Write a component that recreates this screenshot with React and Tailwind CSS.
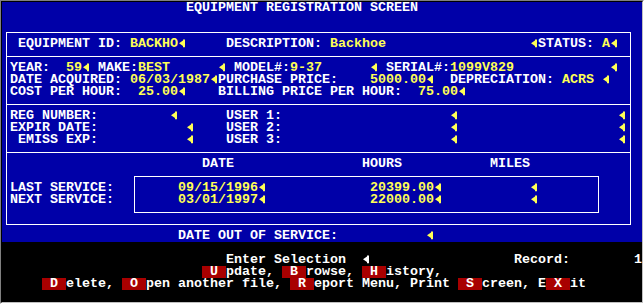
import React from 'react';

// colours of the old text-mode palette
const W = 'text-white';
const Y = 'text-[#ffff55]';
const RED = 'bg-[#a80000] text-white';

// the little "◄" field marker, drawn so it sits exactly in one 8px cell
const Arrow = ({ color }) => (
    <span className={`inline-block w-2 h-3 align-top ${color}`}>
        <svg width="8" height="12" viewBox="0 0 8 12" className="block">
            <polygon points="1,5.3 5,2.6 5,1.4 7,1.4 7,9.2 5,9.2 5,8" fill="currentColor" />
        </svg>
    </span>
);

// one cell run of text, kept to the 12px row height
const Cell = ({ className = '', children }) => (
    <span className={`inline-block h-3 leading-3 align-top ${className}`}>{children}</span>
);

// one screen line; items are [column, kind, text]
const Line = ({ start = 0, items = [] }) => {
    let col = start;
    const out = [];
    items.forEach(([at, kind, text], i) => {
        if (at > col) {
            out.push(<Cell key={`s${i}`}>{' '.repeat(at - col)}</Cell>);
            col = at;
        }
        if (kind === 'a' || kind === 'aw') {
            out.push(<Arrow key={i} color={kind === 'a' ? Y : W} />);
            col += 1;
        } else {
            const cls = kind === 'y' ? Y : kind === 'r' ? RED : W;
            out.push(<Cell key={i} className={cls}>{text}</Cell>);
            col += text.length;
        }
    });
    return <div className="h-3 leading-3 whitespace-pre">{out}</div>;
};

const Section = ({ children, last }) => (
    <div className={`pl-[3px] pt-[5px] pb-[6px] ${last ? '' : 'border-b border-white'}`}>{children}</div>
);

export default function App() {
    return (
        <div className="w-[644px] h-[304px] border border-[#808080] border-r-white border-b-white">
            <div className="w-[642px] h-[302px] border border-black border-r-[#c0c0c0] border-b-[#c0c0c0] font-['Liberation_Mono','DejaVu_Sans_Mono',monospace] text-[13.33px] font-bold">
                {/* blue form area */}
                <div className="h-[240px] bg-[#0000a8]">
                    <Line items={[[23, 'w', 'EQUIPMENT REGISTRATION SCREEN']]} />
                    <Line />

                    <div className="ml-1 mt-[6px] w-[625px] border border-white">
                        <Section>
                            <Line start={1} items={[
                                [2, 'w', 'EQUIPMENT ID:'], [16, 'y', 'BACKHO'], [22, 'a'],
                                [28, 'w', 'DESCRIPTION:'], [41, 'y', 'Backhoe'],
                                [66, 'a'], [67, 'w', 'STATUS:'], [75, 'y', 'A'], [76, 'a'],
                            ]} />
                        </Section>

                        <Section>
                            <Line start={1} items={[
                                [1, 'w', 'YEAR:'], [8, 'y', '59'], [10, 'a'],
                                [12, 'w', 'MAKE:'], [17, 'y', 'BEST'], [27, 'a'],
                                [29, 'w', 'MODEL#:'], [36, 'y', '9-37'], [46, 'a'],
                                [48, 'w', 'SERIAL#:'], [56, 'y', '1099V829'], [76, 'a'],
                            ]} />
                            <Line start={1} items={[
                                [1, 'w', 'DATE ACQUIRED:'], [16, 'y', '06/03/1987'], [26, 'a'],
                                [27, 'w', 'PURCHASE PRICE:'], [46, 'y', '5000.00'], [53, 'a'],
                                [56, 'w', 'DEPRECIATION:'], [70, 'y', 'ACRS'], [75, 'a'],
                            ]} />
                            <Line start={1} items={[
                                [1, 'w', 'COST PER HOUR:'], [17, 'y', '25.00'], [22, 'a'],
                                [27, 'w', 'BILLING PRICE PER HOUR:'], [52, 'y', '75.00'], [57, 'a'],
                            ]} />
                        </Section>

                        <Section>
                            <Line start={1} items={[[1, 'w', 'REG NUMBER:'], [21, 'a'], [28, 'w', 'USER 1:'], [56, 'a'], [77, 'a']]} />
                            <Line start={1} items={[[1, 'w', 'EXPIR DATE:'], [23, 'a'], [28, 'w', 'USER 2:'], [56, 'a'], [77, 'a']]} />
                            <Line start={1} items={[[2, 'w', 'EMISS EXP:'], [23, 'a'], [28, 'w', 'USER 3:'], [56, 'a'], [77, 'a']]} />
                        </Section>

                        {/* service block */}
                        <div className="pt-[5px] pb-[11px]">
                            <div className="pl-[3px]">
                                <Line start={1} items={[[25, 'w', 'DATE'], [45, 'w', 'HOURS'], [61, 'w', 'MILES']]} />
                            </div>
                            <div className="flex mt-[6px]">
                                <div className="w-[127px] pl-[3px] pt-[6px]">
                                    <Line start={1} items={[[1, 'w', 'LAST SERVICE:']]} />
                                    <Line start={1} items={[[1, 'w', 'NEXT SERVICE:']]} />
                                </div>
                                <div className="w-[465px] border border-white pl-[3px] pt-[5px] pb-[6px]">
                                    <Line start={17} items={[[22, 'y', '09/15/1996'], [32, 'a'], [46, 'y', '20399.00'], [54, 'a'], [66, 'a']]} />
                                    <Line start={17} items={[[22, 'y', '03/01/1997'], [32, 'a'], [46, 'y', '22000.00'], [54, 'a'], [66, 'a']]} />
                                </div>
                            </div>
                        </div>
                    </div>

                    <div className="mt-[5px]">
                        <Line items={[[22, 'w', 'DATE OUT OF SERVICE:'], [53, 'a']]} />
                    </div>
                </div>

                {/* black menu area */}
                <div className="h-[60px] bg-black pt-3">
                    <Line items={[[28, 'w', 'Enter Selection'], [45, 'aw'], [64, 'w', 'Record:'], [79, 'w', '1']]} />
                    <Line items={[
                        [25, 'r', ' U '], [28, 'w', 'pdate, '], [35, 'r', ' B '], [38, 'w', 'rowse, '],
                        [45, 'r', ' H '], [48, 'w', 'istory,'],
                    ]} />
                    <Line items={[
                        [5, 'r', ' D '], [8, 'w', 'elete, '], [15, 'r', ' O '], [18, 'w', 'pen another file, '],
                        [36, 'r', ' R '], [39, 'w', 'eport Menu, Print '], [57, 'r', ' S '],
                        [60, 'w', 'creen, E'], [68, 'r', ' X '], [71, 'w', 'it'],
                    ]} />
                </div>
            </div>
        </div>
    );
}
